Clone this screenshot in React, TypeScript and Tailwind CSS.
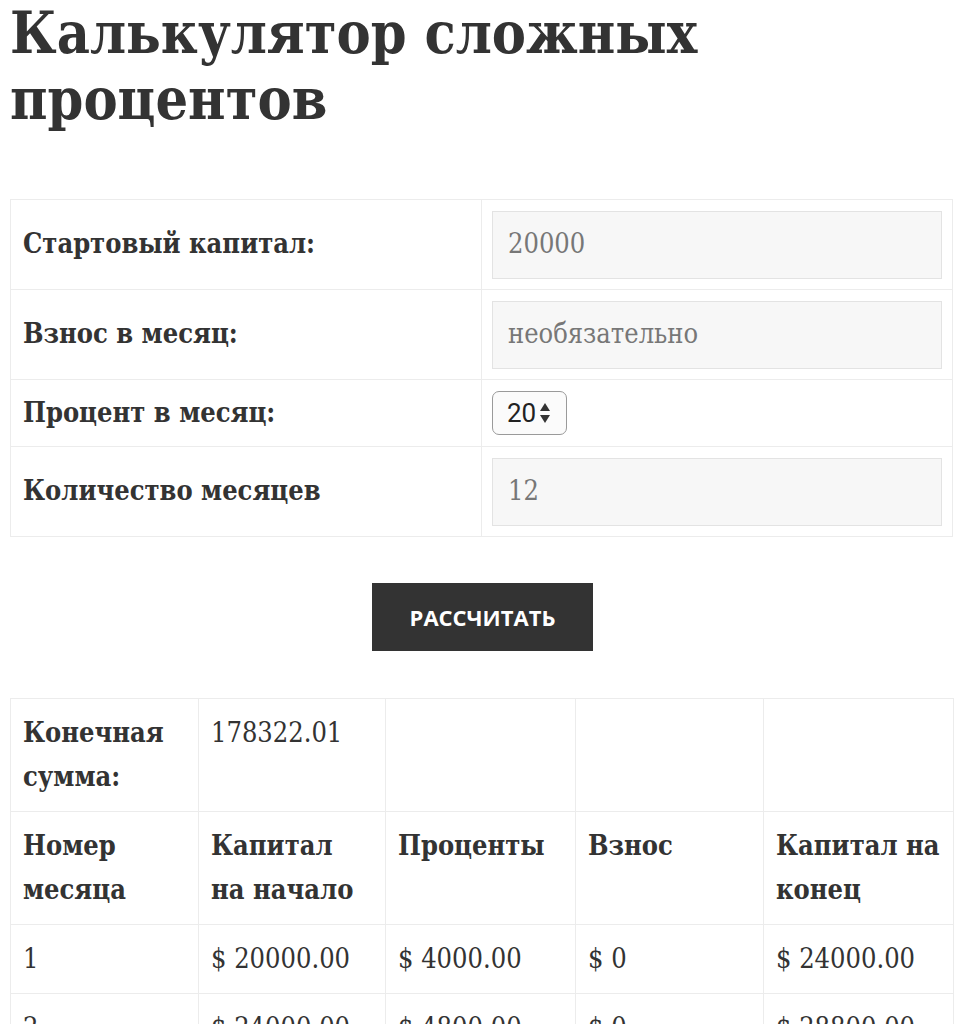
import React from 'react';

const serif = { fontFamily: '"DejaVu Serif Condensed", "Liberation Serif", serif' };

const rows = [
  ['1', '$ 20000.00', '$ 4000.00', '$ 0', '$ 24000.00'],
  ['2', '$ 24000.00', '$ 4800.00', '$ 0', '$ 28800.00'],
];

function Field({ value }: { value: string }) {
  return (
    <div className="h-[68px] w-full bg-[#f7f7f7] border border-[#e3e3e3] flex items-center px-[15px] text-[27px] text-[#777]">
      {value}
    </div>
  );
}

export default function App() {
  return (
    <div className="bg-white text-[#333] px-[10px] min-h-screen" style={serif}>
      {/* Заголовок */}
      <h1 className="text-[57px] leading-[66px] font-bold m-0">Калькулятор сложных процентов</h1>

      <table className="w-[943px] mt-[67px] border-collapse border border-[#ececec] text-[27px]">
        <tbody>
          <tr className="h-[90px]">
            <td className="w-[471px] border border-[#ececec] px-[12px] font-bold align-middle">Стартовый капитал:</td>
            <td className="border border-[#ececec] px-[10px] py-[10px] align-middle"><Field value="20000" /></td>
          </tr>
          <tr className="h-[90px]">
            <td className="border border-[#ececec] px-[12px] font-bold align-middle">Взнос в месяц:</td>
            <td className="border border-[#ececec] px-[10px] py-[10px] align-middle"><Field value="необязательно" /></td>
          </tr>
          <tr className="h-[67px]">
            <td className="border border-[#ececec] px-[12px] font-bold align-middle">Процент в месяц:</td>
            <td className="border border-[#ececec] px-[10px] align-middle">
              <div className="w-[75px] h-[44px] border border-[#9a9a9a] rounded-[7px] bg-[#fbfbfb] flex items-center pl-[14px] gap-[3px] text-[26px] text-[#222]" style={{ fontFamily: 'Roboto, "Liberation Sans", sans-serif' }}>
                <span>20</span>
                <svg width="12" height="24" viewBox="0 0 12 24">
                  <path d="M6 2 L11 10 L1 10 Z" fill="#333" />
                  <path d="M1 14 L11 14 L6 22 Z" fill="#333" />
                </svg>
              </div>
            </td>
          </tr>
          <tr className="h-[90px]">
            <td className="border border-[#ececec] px-[12px] font-bold align-middle">Количество месяцев</td>
            <td className="border border-[#ececec] px-[10px] py-[10px] align-middle"><Field value="12" /></td>
          </tr>
        </tbody>
      </table>

      <div className="flex justify-center mt-[46px]">
        <button className="w-[221px] h-[68px] bg-[#333] text-white text-[22px] font-bold uppercase" style={{ fontFamily: '"Open Sans", "Liberation Sans", sans-serif' }}>
          Рассчитать
        </button>
      </div>

      <table className="w-[943px] mt-[47px] table-fixed border-collapse border border-[#ececec] text-[27px] leading-[44px]">
        <colgroup>
          <col className="w-[188px]" />
          <col className="w-[187px]" />
          <col className="w-[190px]" />
          <col className="w-[188px]" />
          <col className="w-[190px]" />
        </colgroup>
        <tbody>
          <tr>
            <td className="border border-[#ececec] px-[12px] py-[12px] align-top font-bold">Конечная сумма:</td>
            <td className="border border-[#ececec] px-[12px] py-[12px] align-top">178322.01</td>
            <td className="border border-[#ececec]"></td>
            <td className="border border-[#ececec]"></td>
            <td className="border border-[#ececec]"></td>
          </tr>
          <tr>
            <td className="border border-[#ececec] px-[12px] py-[12px] align-top font-bold">Номер месяца</td>
            <td className="border border-[#ececec] px-[12px] py-[12px] align-top font-bold">Капитал<br />на начало</td>
            <td className="border border-[#ececec] px-[12px] py-[12px] align-top font-bold">Проценты</td>
            <td className="border border-[#ececec] px-[12px] py-[12px] align-top font-bold">Взнос</td>
            <td className="border border-[#ececec] px-[12px] py-[12px] align-top font-bold">Капитал на конец</td>
          </tr>
          {rows.map((r) => (
            <tr key={r[0]}>
              {r.map((c, i) => (
                <td key={i} className="border border-[#ececec] px-[12px] py-[12px] align-top">{c}</td>
              ))}
            </tr>
          ))}
        </tbody>
      </table>
    </div>
  );
}
